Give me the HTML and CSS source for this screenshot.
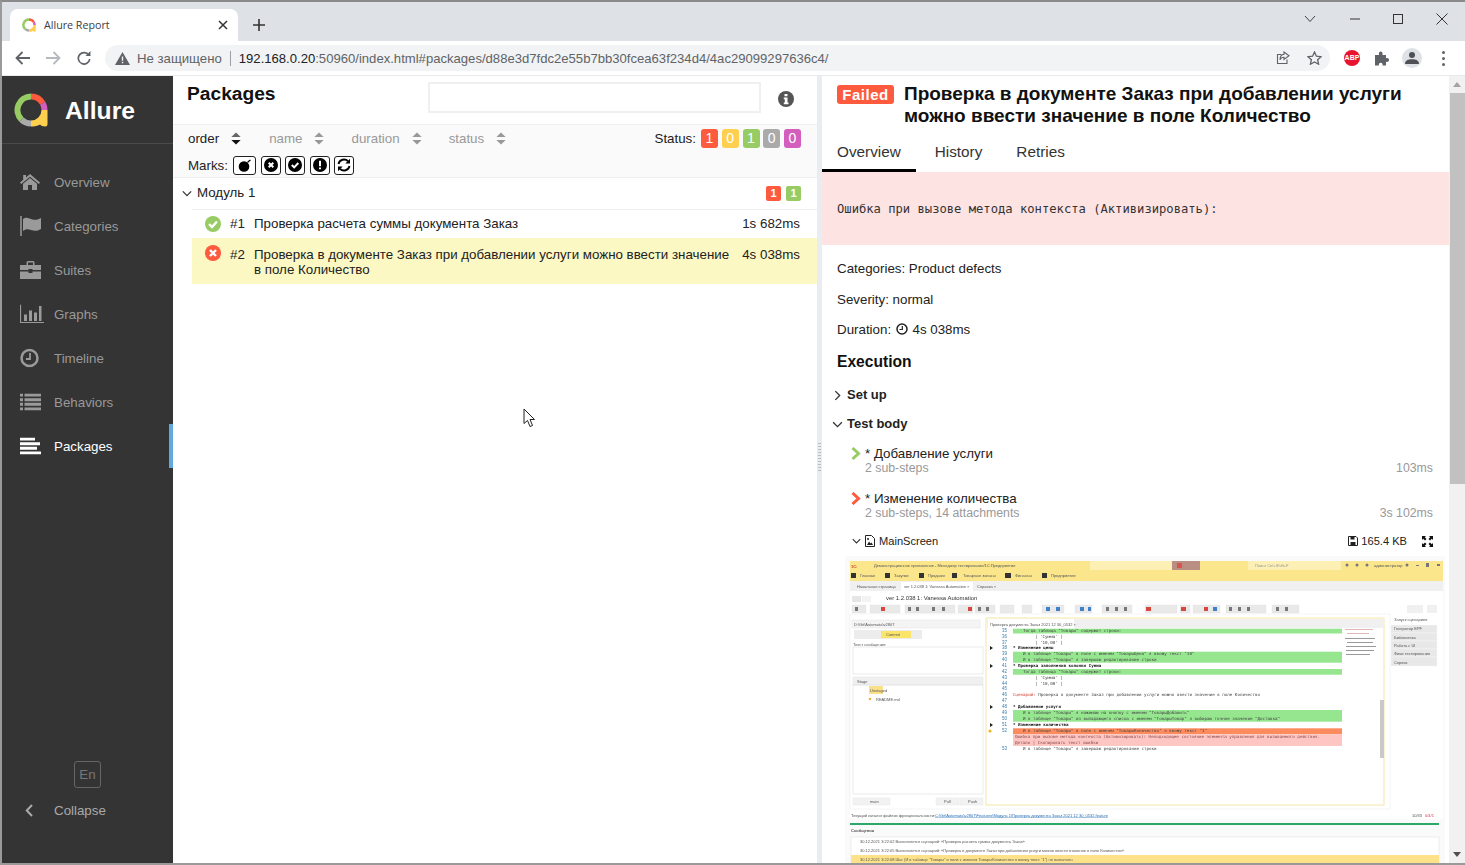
FILE: index.html
```html
<!DOCTYPE html>
<html lang="ru">
<head>
<meta charset="utf-8">
<title>Allure Report</title>
<link rel="stylesheet" href="styles.css">
</head>
<body>
<svg class="defs" width="0" height="0" aria-hidden="true">
  <symbol id="logo" viewBox="0 0 34 34">
    <path d="M17 3.500A13.500 13.500 0 0 1 28.700 10.250" fill="none" stroke="#fd5a3e" stroke-width="6"/>
    <path d="M28.700 10.250A13.500 13.500 0 0 1 30.500 17" fill="none" stroke="#d35ebe" stroke-width="6"/>
    <path d="M17 30.500A13.500 13.500 0 0 1 7.450 26.550" fill="none" stroke="#aaa" stroke-width="6"/>
    <path d="M7.450 26.550A13.500 13.500 0 0 1 17 3.500" fill="none" stroke="#97cc64" stroke-width="6"/>
    <path d="M27.500 17H33.500V31a2.500 2.500 0 0 1-2.500 2.500c-2.500 0-4-.8-5-2-2.500 1.500-5.500 2-9 2V27.500A10.500 10.500 0 0 0 27.500 17z" fill="#ffd050"/>
  </symbol>
  <symbol id="sort" viewBox="0 0 10 14"><path d="M5 0.500 10 5.500H0zM5 13.500 0 8.500H10z"/></symbol>
  <symbol id="chev-down" viewBox="0 0 12 8"><path d="M1 1.500 6 6.500 11 1.500" fill="none" stroke="currentColor" stroke-width="1.500"/></symbol>
  <symbol id="chev-right" viewBox="0 0 8 12"><path d="M1.500 1 6.500 6 1.500 11" fill="none" stroke="currentColor" stroke-width="1.500"/></symbol>
  <symbol id="step-chev" viewBox="0 0 10 13"><path d="M1.500 1 7.500 6.500 1.500 12" fill="none" stroke="currentColor" stroke-width="3"/></symbol>
</svg>

<div class="window">
  <header class="tabstrip">
    <div class="tab">
      <svg class="favicon" width="14" height="14"><use href="#logo"/></svg>
      <span class="tab-title">Allure Report</span>
      <svg class="tab-close" width="10" height="10" viewBox="0 0 10 10"><path d="M1 1 9 9M9 1 1 9" stroke="#333" stroke-width="1.500"/></svg>
    </div>
    <svg class="new-tab" width="12" height="12" viewBox="0 0 12 12"><path d="M6 0V12M0 6H12" stroke="#333" stroke-width="1.600"/></svg>
    <div class="win-controls">
      <svg width="12" height="8" viewBox="0 0 12 8"><path d="M1 1 6 6.500 11 1" fill="none" stroke="#444" stroke-width="1"/></svg>
      <svg class="wc-min" width="10" height="2" viewBox="0 0 10 2"><path d="M0 1H10" stroke="#333" stroke-width="1"/></svg>
      <svg class="wc-max" width="10" height="10" viewBox="0 0 10 10"><rect x=".5" y=".5" width="9" height="9" fill="none" stroke="#333"/></svg>
      <svg class="wc-close" width="12" height="12" viewBox="0 0 12 12"><path d="M.5.500 11.500 11.500M11.500.500.500 11.500" stroke="#333" stroke-width="1"/></svg>
    </div>
  </header>

  <nav class="toolbar">
    <svg class="tb-btn" width="16" height="14" viewBox="0 0 16 14"><path d="M15 7H2M7.500 1 1.500 7l6 6" fill="none" stroke="#5f6368" stroke-width="1.800"/></svg>
    <svg class="tb-btn tb-fwd" width="16" height="14" viewBox="0 0 16 14"><path d="M1 7H14M8.500 1l6 6-6 6" fill="none" stroke="#b5b8bc" stroke-width="1.800"/></svg>
    <svg class="tb-btn" width="14" height="14" viewBox="0 0 14 14"><path d="M11.800 4.200A5.700 5.700 0 1 0 12.700 8" fill="none" stroke="#5f6368" stroke-width="1.700"/><path d="M8.500 5H13.500V0z" fill="#5f6368"/></svg>
    <div class="omnibox">
      <svg class="warn" width="15" height="13" viewBox="0 0 15 13"><path d="M7.500 0 15 13H0z" fill="#5f6368"/><path d="M6.800 4.500h1.400v4.200H6.800zM6.800 9.800h1.400v1.400H6.800z" fill="#f1f3f4"/></svg>
      <span class="insecure">Не защищено</span>
      <span class="omni-sep"></span>
      <span class="url"><span class="url-host">192.168.0.20</span>:50960/index.html#packages/d88e3d7fdc2e55b7bb30fcea63f234d4/4ac29099297636c4/</span>
      <svg class="omni-share" width="14" height="14" viewBox="0 0 14 14"><path d="M11 8.500V12.500H1.500V3.500H5.500" fill="none" stroke="#5f6368" stroke-width="1.100"/><path d="M8 1 13 4.800 8 8.500V6.300C6 6.300 4.800 7 4 8.800 4 5.500 5.500 3.600 8 3.300z" fill="none" stroke="#5f6368" stroke-width="1.100"/></svg>
      <svg class="omni-star" width="15" height="14" viewBox="0 0 15 14"><path d="M7.500 1 9.400 5.200 14 5.700 10.600 8.700 11.600 13.200 7.500 10.900 3.400 13.200 4.400 8.700 1 5.700 5.600 5.200z" fill="none" stroke="#5f6368" stroke-width="1.300"/></svg>
    </div>
    <span class="abp">ABP</span>
    <svg class="puzzle" width="15" height="15" viewBox="0 0 15 15"><path d="M1 4H5C4.500 1.500 5.500.500 6.700.500S9 1.500 8.500 4H12V7.200C14.500 6.800 15 8 15 9S14.500 11.200 12 10.800V14.500H8.500C9 12.500 8 11.700 6.700 11.700S4.500 12.500 5 14.500H1z" fill="#5f6368"/></svg>
    <span class="avatar"><svg width="14" height="12" viewBox="0 0 14 12"><circle cx="7" cy="3" r="3" fill="#4d5156"/><path d="M0 12C0 8.500 3 7.300 7 7.300S14 8.500 14 12z" fill="#4d5156"/></svg></span>
    <span class="kebab"><i></i><i></i><i></i></span>
  </nav>

  <div class="app">
    <aside class="sidebar">
      <div class="brand">
        <svg class="brand-logo" width="34" height="34"><use href="#logo"/></svg>
        <span class="brand-name">Allure</span>
      </div>
      <ul class="menu">
        <li class="menu-item"><svg class="menu-icon" width="20" height="16" viewBox="0 0 20 16"><path d="M10 0 20 8.500 18.800 10 10 2.700 1.200 10 0 8.500 3.200 5.800V1H6V3.500z" fill="#9a9a9a"/><path d="M10 4 17 9.800V16H12V11H8V16H3V9.800z" fill="#9a9a9a"/></svg><span>Overview</span></li>
        <li class="menu-item"><svg class="menu-icon" width="21" height="20" viewBox="0 0 21 20"><path d="M1 0V20" stroke="#9a9a9a" stroke-width="1.500"/><path d="M3 3C6 .5 9 2 11 3S17 4.500 21 2V13C17 15.500 14 15 11 14S6 12.500 3 15z" fill="#9a9a9a"/></svg><span>Categories</span></li>
        <li class="menu-item"><svg class="menu-icon" width="21" height="18" viewBox="0 0 21 18"><path d="M6.500 4V1.500A1.500 1.500 0 0 1 8 0h5a1.500 1.500 0 0 1 1.500 1.500V4H21V9H12.500V8H8.500V9H0V4zM8 4h5V1.600H8zM0 10.500H8.500V12H12.500V10.500H21V18H0z" fill="#9a9a9a"/></svg><span>Suites</span></li>
        <li class="menu-item"><svg class="menu-icon" width="24" height="19" viewBox="0 0 24 19"><path d="M.5 0V18H24" fill="none" stroke="#9a9a9a" stroke-width="1.200"/><path d="M4 10H7V16.500H4zM9 6H12V16.500H9zM14 8H17V16.500H14zM19 1.500H21.500V16.500H19z" fill="#9a9a9a"/></svg><span>Graphs</span></li>
        <li class="menu-item"><svg class="menu-icon" width="19" height="19" viewBox="0 0 19 19"><circle cx="9.500" cy="9.500" r="8" fill="none" stroke="#9a9a9a" stroke-width="2.500"/><path d="M10 4.500V10.500H6" fill="none" stroke="#9a9a9a" stroke-width="1.800"/></svg><span>Timeline</span></li>
        <li class="menu-item"><svg class="menu-icon" width="21" height="17" viewBox="0 0 21 17"><path d="M0 0H3V3H0zM4.500 0H21V3H4.500zM0 4.700H3V7.700H0zM4.500 4.700H21V7.700H4.500zM0 9.300H3V12.300H0zM4.500 9.300H21V12.300H4.500zM0 14H3V17H0zM4.500 14H21V17H4.500z" fill="#9a9a9a"/></svg><span>Behaviors</span></li>
        <li class="menu-item is-active"><svg class="menu-icon" width="21" height="17" viewBox="0 0 21 17"><path d="M0 0H15V3H0zM0 4.700H20V7.700H0zM0 9.300H17V12.300H0zM0 14H21V17H0z" fill="#fff"/></svg><span>Packages</span></li>
      </ul>
      <div class="side-foot">
        <span class="lang">En</span>
        <div class="collapse"><svg class="menu-icon collapse-icon" width="8" height="13" viewBox="0 0 8 13"><path d="M7 1 1.800 6.500 7 12" fill="none" stroke="#aaa" stroke-width="2"/></svg><span>Collapse</span></div>
      </div>
    </aside>

    <main class="tree-pane">
      <div class="tree-head">
        <h2 class="tree-title">Packages</h2>
        <input class="search" type="text" aria-label="search">
        <svg class="info" width="16" height="16" viewBox="0 0 16 16"><circle cx="8" cy="8" r="8" fill="#555"/><path d="M6.500 3h3v2.300h-3zM5.800 6.500h3.700v5h1v1.700H5.800v-1.700h1v-3.300h-1z" fill="#fff"/></svg>
      </div>
      <div class="tree-controls">
        <div class="ctrl-row">
          <span class="sorter is-on">order<svg class="sort" width="10" height="13" viewBox="0 0 10 14"><path class="sort-up" d="M5 0.500 10 5.500H0z"/><path d="M5 13.500 0 8.500H10z"/></svg></span>
          <span class="sorter">name<svg class="sort" width="10" height="13"><use href="#sort"/></svg></span>
          <span class="sorter">duration<svg class="sort" width="10" height="13"><use href="#sort"/></svg></span>
          <span class="sorter">status<svg class="sort" width="10" height="13"><use href="#sort"/></svg></span>
          <span class="status-label">Status:</span>
          <span class="count c-failed">1</span><span class="count c-broken">0</span><span class="count c-passed">1</span><span class="count c-skipped">0</span><span class="count c-unknown">0</span>
        </div>
        <div class="ctrl-row marks-row">
          <span class="marks-label">Marks:</span>
          <span class="mark mark-wide"><svg width="14" height="14" viewBox="0 0 14 14"><circle cx="6" cy="8.500" r="5.300" fill="#000"/><path d="M9.500 4.500 11 3l1.500-1" stroke="#000" stroke-width="1.200"/></svg></span>
          <span class="mark"><svg width="14" height="14" viewBox="0 0 14 14"><circle cx="7" cy="7" r="7" fill="#000"/><path d="M4.700 4.700 9.300 9.300M9.300 4.700 4.700 9.300" stroke="#fff" stroke-width="2"/></svg></span>
          <span class="mark"><svg width="14" height="14" viewBox="0 0 14 14"><circle cx="7" cy="7" r="7" fill="#000"/><path d="M3.800 7 6.200 9.400 10.300 5" fill="none" stroke="#fff" stroke-width="2"/></svg></span>
          <span class="mark"><svg width="14" height="14" viewBox="0 0 14 14"><circle cx="7" cy="7" r="7" fill="#000"/><path d="M6 2.800H8V8.200H6zM6 9.500H8V11.300H6z" fill="#fff"/></svg></span>
          <span class="mark"><svg width="14" height="14" viewBox="0 0 14 14"><path d="M1.500 6A5.600 5.600 0 0 1 11 3.200M12.500 8A5.600 5.600 0 0 1 3 10.800" fill="none" stroke="#000" stroke-width="1.900"/><path d="M13 .8V5.500H8.300zM1 13.200V8.500H5.700z" fill="#000"/></svg></span>
        </div>
      </div>
      <div class="group-row">
        <svg class="group-chev" width="10" height="7"><use href="#chev-down"/></svg>
        <span class="group-name">Модуль 1</span>
        <span class="mini c-failed">1</span><span class="mini c-passed">1</span>
      </div>
      <div class="test-row">
        <svg class="st" width="16" height="16" viewBox="0 0 16 16"><circle cx="8" cy="8" r="8" fill="#97cc64"/><path d="M4 8.200 7 11 12 5.500" fill="none" stroke="#fff" stroke-width="2.400"/></svg>
        <span class="num">#1</span>
        <span class="name">Проверка расчета суммы документа Заказ</span>
        <span class="time">1s 682ms</span>
      </div>
      <div class="test-row is-selected">
        <svg class="st" width="16" height="16" viewBox="0 0 16 16"><circle cx="8" cy="8" r="8" fill="#fd5a3e"/><path d="M5 5 11 11M11 5 5 11" stroke="#fff" stroke-width="2.400"/></svg>
        <span class="num">#2</span>
        <span class="name">Проверка в документе Заказ при добавлении услуги можно ввести значение в поле Количество</span>
        <span class="time">4s 038ms</span>
      </div>
    </main>

    <div class="splitter"><span class="grip"></span></div>

    <section class="detail">
      <div class="detail-head">
        <span class="failed-badge">Failed</span>
        <h2 class="detail-title">Проверка в документе Заказ при добавлении услуги можно ввести значение в поле Количество</h2>
      </div>
      <div class="tabs">
        <span class="tabs-item is-current">Overview</span>
        <span class="tabs-item">History</span>
        <span class="tabs-item">Retries</span>
      </div>
      <pre class="error">Ошибка при вызове метода контекста (Активизировать):</pre>
      <p class="meta meta-first">Categories: Product defects</p>
      <p class="meta">Severity: normal</p>
      <p class="meta">Duration: <svg class="clock" width="12" height="12" viewBox="0 0 12 12"><circle cx="6" cy="6" r="5" fill="none" stroke="#222" stroke-width="1.500"/><path d="M6.300 3V6.500H3.500" fill="none" stroke="#222" stroke-width="1.200"/></svg> 4s 038ms</p>
      <h3 class="exec">Execution</h3>
      <div class="stage stage-setup"><svg class="stage-icon" width="7" height="11"><use href="#chev-right"/></svg>Set up</div>
      <div class="stage stage-body"><svg class="stage-icon-d" width="11" height="7"><use href="#chev-down"/></svg>Test body</div>
      <div class="step">
        <svg class="step-chev ok" width="10" height="13"><use href="#step-chev"/></svg>
        <div class="step-text"><div class="step-name">* Добавление услуги</div><div class="step-sub"><span>2 sub-steps</span><span>103ms</span></div></div>
      </div>
      <div class="step">
        <svg class="step-chev bad" width="10" height="13"><use href="#step-chev"/></svg>
        <div class="step-text"><div class="step-name">* Изменение количества</div><div class="step-sub"><span>2 sub-steps, 14 attachments</span><span>3s 102ms</span></div></div>
      </div>
      <div class="attach">
        <svg class="attach-chev" width="9" height="6"><use href="#chev-down"/></svg>
        <svg class="attach-file" width="10" height="12" viewBox="0 0 10 12"><path d="M.5.500H6.500L9.500 3.500V11.500H.5z" fill="none" stroke="#222"/><path d="M2 10 4 6.500 5.500 8.500 6.500 7.500 8 10z" fill="#222"/><circle cx="3" cy="4" r="1" fill="#222"/></svg>
        <span class="attach-name">MainScreen</span>
        <svg class="attach-disk" width="10" height="10" viewBox="0 0 10 10"><path d="M.5.500H8L9.500 2V9.500H.5z" fill="none" stroke="#222"/><path d="M2.500 1H6.500V3.500H2.500zM2.500 6H7.500V9H2.500z" fill="#222"/></svg>
        <span class="attach-size">165.4 KB</span>
        <svg class="attach-expand" width="11" height="11" viewBox="0 0 11 11"><path d="M0 0H4L2.800 1.200 4.500 3 3 4.500 1.200 2.800 0 4zM11 0V4L9.800 2.800 8 4.500 6.500 3 8.200 1.200 7 0zM0 11V7L1.200 8.200 3 6.500 4.500 8 2.800 9.800 4 11zM11 11H7L8.200 9.800 6.500 8 8 6.500 9.800 8.200 11 7z" fill="#111"/></svg>
      </div>
      <div class="shot-wrap">
        <svg class="shot" width="600" height="310" viewBox="845 555 600 310">
          <rect x="845" y="555" width="600" height="310" fill="#fafafa"/>
          <rect x="850" y="560" width="593" height="20" fill="#fbe68c"/>
          <rect x="1090" y="560" width="82" height="9" fill="#fdf0b5"/>
          <rect x="1172" y="560" width="28" height="9" fill="#b98e83"/>
          <rect x="1177" y="562" width="5" height="5" fill="#d9534f"/>
          <rect x="1248" y="560" width="93" height="9" fill="#fdf0b5"/>
          <text class="t4 red b" x="851" y="566.500">1С:</text>
          <text class="t4" x="874" y="566">Демонстрационное приложение - Менеджер тестирования/1С:Предприятие</text>
          <text class="t4" x="1374" y="566">администратор</text>
          <text class="t4 dim" x="1255" y="566">Поиск Ctrl+Shift+F</text>
          <g fill="#777"><circle cx="1347" cy="564" r="1.500"/><circle cx="1357" cy="564" r="1.500"/><circle cx="1367" cy="564" r="1.500"/><circle cx="1407" cy="564" r="1.500"/><rect x="1416" y="564" width="3" height="1"/><rect x="1426" y="562" width="3" height="4"/><rect x="1437" y="563" width="3" height="2"/></g>
          <text class="t4" x="860" y="576">Главная</text><text class="t4" x="894" y="576">Закупки</text><text class="t4" x="928" y="576">Продажи</text><text class="t4" x="963" y="576">Товарные запасы</text><text class="t4" x="1015" y="576">Финансы</text><text class="t4" x="1051" y="576">Предприятие</text>
          <rect x="851" y="572" width="5" height="5" fill="#333"/><rect x="885" y="572" width="5" height="5" fill="#333"/><rect x="919" y="572" width="5" height="5" fill="#333"/><rect x="952" y="572" width="5" height="5" fill="#333"/><rect x="1005" y="572" width="6" height="5" fill="#333"/><rect x="1042" y="572" width="5" height="5" fill="#333"/>
          <rect x="850" y="580" width="593" height="10" fill="#f0f0f0"/>
          <rect x="901" y="581" width="72" height="9" fill="#fff"/>
          <text class="t4" x="857" y="586.500">Начальная страница</text><text class="t4" x="904" y="586.500">ver 1.2.038 1: Vanessa Automation ×</text><text class="t4" x="977" y="586.500">Справка ×</text>
          <rect x="850" y="590" width="593" height="228" fill="#fff"/>
          <text class="t7" x="886" y="599">ver 1.2.038 1: Vanessa Automation</text>
          <rect x="852" y="595" width="9" height="6" fill="#e6e6e6"/><rect x="862" y="595" width="9" height="6" fill="#f3f3f3"/>
          <g fill="#e9e9e9" stroke="#dcdcdc" stroke-width=".3"><rect x="852" y="604" width="14" height="8"/><rect x="870" y="604" width="30" height="8"/><rect x="905" y="604" width="50" height="8"/><rect x="1000" y="604" width="14" height="8"/><rect x="1022" y="604" width="10" height="8"/><rect x="1042" y="604" width="22" height="8"/><rect x="1075" y="604" width="17" height="8"/><rect x="1102" y="604" width="30" height="8"/><rect x="1145" y="604" width="32" height="8"/><rect x="1180" y="604" width="10" height="8"/><rect x="1193" y="604" width="27" height="8"/><rect x="1226" y="604" width="40" height="8"/><rect x="1272" y="604" width="27" height="8"/><rect x="958" y="604" width="15" height="8"/><rect x="975" y="604" width="20" height="8"/></g>
          <g fill="#777"><rect x="855" y="606" width="3" height="4"/><rect x="908" y="606" width="3" height="4"/><rect x="916" y="606" width="3" height="4"/><rect x="932" y="606" width="3" height="4"/><rect x="942" y="606" width="3" height="4"/><rect x="978" y="606" width="3" height="4"/><rect x="986" y="606" width="3" height="4"/><rect x="1106" y="606" width="3" height="4"/><rect x="1115" y="606" width="3" height="4"/><rect x="1124" y="606" width="3" height="4"/><rect x="1229" y="606" width="3" height="4"/><rect x="1238" y="606" width="3" height="4"/><rect x="1247" y="606" width="3" height="4"/><rect x="1276" y="606" width="3" height="4"/><rect x="1285" y="606" width="3" height="4"/></g>
          <g fill="#d8473f"><rect x="881" y="606" width="4" height="4"/><rect x="968" y="606" width="4" height="4"/><rect x="1146" y="606" width="5" height="4"/><rect x="1181" y="606" width="5" height="4"/><rect x="1204" y="606" width="4" height="4"/></g>
          <g fill="#3f80c8"><rect x="1046" y="606" width="4" height="4"/><rect x="1056" y="606" width="4" height="4"/><rect x="1080" y="606" width="4" height="4"/><rect x="1088" y="606" width="3" height="4"/><rect x="1213" y="606" width="4" height="4"/></g>
          <rect x="1407" y="604" width="16" height="8" fill="#f0f0f0"/><rect x="1427" y="604" width="10" height="8" fill="#f0f0f0"/>
          <rect x="850" y="613" width="540" height="195" fill="none" stroke="#eee" stroke-width=".6"/>
          <rect x="852" y="619" width="128" height="8" fill="#f4f4f4" stroke="#e3e3e3" stroke-width=".5"/>
          <text class="t4" x="854" y="624.500">D:\Git\Automata\v2807</text>
          <rect x="854" y="629" width="68" height="9" fill="#ececec"/><rect x="881" y="630" width="30" height="7" fill="#fbe46a"/>
          <text class="t4" x="886" y="635">Commit</text>
          <text class="t4" x="853" y="644.500">Текст сообщения:</text>
          <rect x="853" y="646" width="130" height="27" fill="#fff" stroke="#ddd" stroke-width=".6"/>
          <rect x="853" y="676" width="130" height="8" fill="#f0f0f0" stroke="#ddd" stroke-width=".4"/>
          <text class="t4" x="857" y="681.500">Stage</text>
          <rect x="869" y="685" width="14" height="8" fill="#fbe08a"/>
          <text class="t4" x="870" y="690.500">Unstaged</text>
          <circle cx="870" cy="698" r="1.300" fill="#e8b53c"/>
          <text class="t4" x="876" y="699.500">README.md</text>
          <rect x="853" y="684" width="130" height="109" fill="none" stroke="#ddd" stroke-width=".6"/>
          <rect x="853" y="797" width="37" height="7" fill="#f2f2f2" stroke="#ddd" stroke-width=".3"/><text class="t4" x="870" y="802">main</text>
          <rect x="936" y="797" width="23" height="7" fill="#f2f2f2" stroke="#ddd" stroke-width=".3"/><text class="t4" x="944" y="802">Pull</text>
          <rect x="960" y="797" width="23" height="7" fill="#f2f2f2" stroke="#ddd" stroke-width=".3"/><text class="t4" x="968" y="802">Push</text>
          <rect x="986" y="617" width="398" height="187" fill="#fff" stroke="#f3e6a8" stroke-width="1"/>
          <rect x="987" y="618" width="396" height="9" fill="#f0f0f0"/>
          <rect x="988" y="618" width="86" height="9" fill="#fff"/>
          <text class="t4" x="990" y="624.500">Проверка документа Заказ 2021 12 30_0532 ×</text>
          <g fill="#95e68f"><rect x="1013" y="627.700" width="329" height="4.800"/><rect x="1013" y="650.700" width="329" height="11"/><rect x="1013" y="668" width="329" height="5.700"/><rect x="1013" y="709" width="329" height="11.700"/></g>
          <rect x="1013" y="727.300" width="329" height="6" fill="#fc8b5e"/>
          <rect x="1013" y="733.300" width="329" height="11.700" fill="#fdc6c2"/>
          <g class="ln" transform="translate(0,-.7)">
            <text x="1002" y="632">35</text><text x="1002" y="638">36</text><text x="1002" y="644">37</text><text x="1002" y="649">38</text><text x="1002" y="655">39</text><text x="1002" y="661">40</text><text x="1002" y="667">41</text><text x="1002" y="673">42</text><text x="1002" y="679">43</text><text x="1002" y="685">44</text><text x="1002" y="690">45</text><text x="1002" y="696">46</text><text x="1002" y="702">47</text><text x="1002" y="708">48</text><text x="1002" y="714">49</text><text x="1002" y="720">50</text><text x="1002" y="726">51</text><text x="1002" y="732">52</text><text x="1002" y="750">53</text>
          </g>
          <g class="code" transform="translate(0,-.7)">
            <text x="1023" y="632">Тогда таблица "Товары" содержит строки:</text>
            <text x="1035" y="638">| 'Сумма' |</text><text x="1035" y="644">| '10,00' |</text>
            <text class="b" x="1013" y="649">* Изменение цены</text>
            <text x="1023" y="655">И в таблице "Товары" в поле с именем "ТоварыЦена" я ввожу текст "10"</text>
            <text x="1023" y="661">И в таблице "Товары" я завершаю редактирование строки</text>
            <text class="b" x="1013" y="667">* Проверка заполнения колонки Сумма</text>
            <text x="1023" y="673">Тогда таблица "Товары" содержит строки:</text>
            <text x="1035" y="679">| 'Сумма' |</text><text x="1035" y="685">| '10,00' |</text>
            <text x="1013" y="696"><tspan class="red">Сценарий:</tspan> Проверка в документе Заказ при добавлении услуги можно ввести значение в поле Количество</text>
            <text class="b" x="1013" y="708">* Добавление услуги</text>
            <text x="1023" y="714">И в таблице "Товары" я нажимаю на кнопку с именем "ТоварыДобавить"</text>
            <text x="1023" y="720">И в таблице "Товары" из выпадающего списка с именем "ТоварыТовар" я выбираю точное значение "Доставка"</text>
            <text class="b" x="1013" y="726">* Изменение количества</text>
            <text x="1023" y="732">И в таблице "Товары" в поле с именем "ТоварыКоличество" я ввожу текст "1"</text>
            <text class="err" x="1015" y="737.500">Ошибка при вызове метода контекста (Активизировать): Неподходящее состояние элемента управления для вызываемого действия.</text>
            <text class="err" x="1015" y="743.500">Детали | Скопировать текст ошибки</text>
            <text x="1023" y="750">И в таблице "Товары" я завершаю редактирование строки</text>
          </g>
          <g fill="#222"><path d="M990 645v4l3-2zM990 663v4l3-2zM990 704v4l3-2zM990 722v4l3-2z"/></g>
          <circle cx="990" cy="730" r="1.600" fill="#f0b429"/>
          <g fill="#e2b7b7"><rect x="1345" y="628" width="28" height="1"/><rect x="1347" y="632" width="22" height="1"/></g>
          <g fill="#999"><rect x="1345" y="637" width="30" height="1"/><rect x="1347" y="641" width="26" height="1"/><rect x="1346" y="645" width="30" height="1"/><rect x="1346" y="649" width="28" height="1"/><rect x="1346" y="653" width="24" height="1"/></g>
          <rect x="1380" y="699" width="4" height="58" fill="#c9c9c9"/>
          <rect x="1391" y="615" width="46" height="9" fill="#fff"/>
          <g fill="#e8e8e8" stroke="#f8f8f8" stroke-width=".4"><rect x="1391" y="624" width="46" height="8"/><rect x="1391" y="632" width="46" height="8"/><rect x="1391" y="640" width="46" height="8"/><rect x="1391" y="648" width="46" height="8"/><rect x="1391" y="656" width="46" height="9"/></g>
          <text class="t4" x="1394" y="620">Запуск сценариев</text><text class="t4" x="1394" y="628.500">Генератор EPF</text><text class="t4" x="1394" y="637.500">Библиотека</text><text class="t4" x="1394" y="645.500">Работа с UI</text><text class="t4" x="1394" y="653.500">Фичи тестирования</text><text class="t4" x="1394" y="662.500">Сервис</text>
          <text class="t4" x="851" y="815.500">Текущий каталог файлов функциональности:</text>
          <text class="t4 link" x="935" y="815.500">C:\Git\Automata\v2807\Features\Модуль 1\Проверка документа Заказ 2021 12 30_0532.feature</text>
          <text class="t4" x="1412" y="815.500">10/33</text><text class="t4 tally" x="1425" y="815.500">0/4/1</text>
          <rect x="850" y="822" width="589" height="2" fill="#2aa96a"/>
          <text class="t4 b" x="851" y="830.500">Сообщения</text>
          <rect x="851" y="836" width="588" height="29" fill="#fff" stroke="#ddd" stroke-width=".5"/>
          <rect x="851" y="854" width="588" height="9" fill="#fde28a"/>
          <text class="t4" x="860" y="841.500">30.12.2021 3:22:02 Выполняется сценарий: «Проверка расчета суммы документа Заказ»</text>
          <text class="t4" x="860" y="850.500">30.12.2021 3:22:05 Выполняется сценарий: «Проверка в документе Заказ при добавлении услуги можно ввести значение в поле Количество»</text>
          <text class="t4" x="860" y="859.500">30.12.2021 3:22:08 Шаг (И в таблице "Товары" в поле с именем ТоварыКоличество я ввожу текст "1") не выполнен.</text>
        </svg>
      </div>
    </section>

    <div class="scrollbar">
      <span class="arrow-up"></span>
      <span class="thumb"></span>
      <span class="arrow-down"></span>
    </div>
  </div>

  <svg class="cursor" width="13" height="20" viewBox="0 0 13 20"><path d="M1 1V15.500L4.500 12.500 7 18.500 9.500 17.500 7 11.500H11.500z" fill="#fff" stroke="#222" stroke-width="1"/></svg>
</div>
</body>
</html>
```

FILE: styles.css
```css
* { box-sizing: border-box; }
html, body { margin: 0; height: 100%; overflow: hidden; background: #fff; }
body { font-family: "Liberation Sans", Arial, sans-serif; font-size: 13.33px; color: #222; }
.defs { position: absolute; }
ul, h2, h3, p, pre { margin: 0; padding: 0; }
ul { list-style: none; }

.window { position: relative; width: 1465px; height: 865px; display: flex; flex-direction: column; border-top: 2px solid #8a8a8a; border-left: 2px solid #9a9a9a; border-bottom: 2px solid #999; }

/* browser chrome */
.tabstrip { height: 39px; flex: none; background: #dee1e6; display: flex; align-items: flex-end; padding-left: 8px; }
.tab { width: 228px; height: 32px; background: #fff; border-radius: 8px 8px 0 0; display: flex; align-items: center; padding: 0 6px 0 12px; }
.favicon { flex: none; }
.tab-title { margin-left: 8px; font-family: "Open Sans", "Liberation Sans", sans-serif; font-size: 10.700px; color: #3c4043; flex: 1; }
.tab-close { margin-right: 4px; }
.new-tab { margin: 0 0 10px 15px; flex: none; }
.win-controls { margin: 0 17px 0 auto; align-self: flex-start; padding-top: 7px; height: 26px; display: flex; align-items: center; }
.wc-min { margin-left: 34px; }
.wc-max { margin-left: 33px; }
.wc-close { margin-left: 33px; }

.toolbar { height: 35px; flex: none; background: #fff; display: flex; align-items: center; padding-left: 13px; border-bottom: 1px solid #e8eaed; }
.tb-btn { margin-right: 14px; flex: none; }
.tb-fwd { margin-right: 16px; }
.omnibox { width: 1225px; height: 26px; border-radius: 13px; background: #f1f3f4; display: flex; align-items: center; padding-left: 10px; flex: none; }
.warn { flex: none; }
.insecure { margin-left: 7px; color: #5f6368; font-size: 13.200px; }
.omni-sep { width: 1px; height: 15px; background: #9aa0a6; margin: 0 8px 0 8px; }
.url { color: #5f6368; font-size: 13.100px; white-space: nowrap; }
.url-host { color: #202124; }
.omni-share { margin-left: auto; }
.omni-star { margin: 0 8px 0 17px; }
.abp { width: 16px; height: 16px; border-radius: 50%; background: #e8142f; color: #fff; font-size: 7px; font-weight: bold; line-height: 16px; text-align: center; margin-left: 14px; flex: none; }
.puzzle { margin-left: 14px; flex: none; }
.avatar { width: 20px; height: 20px; border-radius: 50%; background: #dee1e6; margin-left: 13px; display: flex; align-items: center; justify-content: center; flex: none; }
.kebab { display: flex; flex-direction: column; gap: 3px; margin-left: 20px; }
.kebab i { width: 3px; height: 3px; border-radius: 50%; background: #5f6368; }

/* app */
.app { flex: 1; min-height: 0; display: flex; }
.sidebar { width: 171px; flex: none; background: #343434; display: flex; flex-direction: column; }
.brand { height: 68px; display: flex; align-items: center; padding: 0 0 0 12px; border-bottom: 1px solid #4a4a4a; flex: none; }
.brand-name { margin: 3px 0 0 17px; color: #fff; font-size: 24.700px; font-weight: bold; }
.menu { padding-top: 16px; }
.menu-item { height: 44px; display: flex; align-items: center; color: #999; position: relative; }
.menu-item .menu-icon { position: absolute; left: 18px; top: 50%; transform: translateY(-50%); }
.menu-item span { margin-left: 52px; }
.menu-item.is-active { color: #fff; }
.menu-item.is-active::after { content: ""; position: absolute; right: 0; top: 0; bottom: 0; width: 4px; background: #5ea9dd; }
.side-foot { margin-top: auto; padding-bottom: 31px; display: flex; flex-direction: column; }
.lang { width: 27px; height: 27px; margin-left: 72px; border: 1px solid #666; border-radius: 3px; color: #777; line-height: 25px; text-align: center; }
.collapse { height: 44px; display: flex; align-items: center; color: #aaa; position: relative; }
.collapse-icon { margin-left: 23px; }
.collapse span { margin-left: 21px; }

.tree-pane { width: 644px; flex: none; background: #fff; display: flex; flex-direction: column; overflow: hidden; }
.tree-head { height: 49px; display: flex; align-items: flex-start; border-bottom: 1px solid #eee; flex: none; padding: 0 23px 0 14px; }
.tree-title { font-size: 19.200px; font-weight: bold; color: #111; line-height: 23px; margin-top: 6px; }
.search { width: 333px; height: 31px; margin: 6px 0 0 auto; border: 2px solid #f0f0f0; background: #fff; flex: none; }
.info { margin: 15px 0 0 17px; }
.tree-controls { background: #fafafa; height: 53px; border-bottom: 1px solid #eee; padding-left: 15px; flex: none; }
.ctrl-row { display: flex; align-items: center; height: 26px; }
.marks-row { margin-top: 1px; }
.sorter { display: inline-flex; align-items: center; color: #999; margin-right: 27px; }
.sorter.is-on { color: #222; margin-right: 28px; }
.sort { margin-left: 12px; fill: #999; }
.sorter.is-on .sort { fill: #111; }
.sorter.is-on .sort-up { fill: #666; }
.status-label { margin-left: auto; margin-right: 5px; }
.count { width: 17px; height: 19px; border-radius: 3px; color: #fff; text-align: center; line-height: 19px; margin-right: 3.750px; font-size: 14px; }
.count:last-child { margin-right: 16px; }
.c-failed { background: #fd5a3e; }
.c-broken { background: #ffd050; }
.c-passed { background: #97cc64; }
.c-skipped { background: #aaa; }
.c-unknown { background: #d35ebe; }
.marks-label { margin-right: 5px; }
.mark { width: 20px; height: 19px; border: 1px solid #222; border-radius: 3px; background: #fff; display: inline-flex; align-items: center; justify-content: center; margin-right: 4.500px; }
.mark-wide { width: 23px; }
.group-row { height: 31px; display: flex; align-items: center; padding-left: 9px; flex: none; }
.group-chev { color: #333; }
.group-name { margin: 0 0 3px 5px; flex: 1; }
.mini { width: 15px; height: 15px; border-radius: 2px; color: #fff; font-size: 11px; font-weight: bold; line-height: 15px; text-align: center; margin-right: 5px; }
.mini:last-child { margin-right: 16px; }
.test-row { margin-left: 19px; border-top: 1px solid #eee; display: flex; align-items: flex-start; padding: 6px 17px 6px 13px; line-height: 15px; }
.test-row.is-selected { background: #fcf8c4; border-top-color: #fcf8c4; padding: 8px 17px 7px 13px; }
.is-selected .st { margin-top: -2px; }
.st { flex: none; }
.num { width: 24px; margin-left: 9px; flex: none; }
.name { flex: 1; padding-right: 12px; }
.time { flex: none; }

.splitter { width: 5px; flex: none; background: #e9edf2; display: flex; align-items: center; justify-content: center; }
.grip { width: 3px; height: 30px; margin-top: -24px; background: repeating-linear-gradient(to bottom, #b8bcc2 0 1px, transparent 1px 3px); }

.detail { width: 627px; flex: none; background: #fff; overflow: hidden; display: flex; flex-direction: column; }
.detail-head { display: flex; align-items: flex-start; padding: 7px 30px 0 15px; flex: none; }
.failed-badge { width: 57px; height: 19px; margin: 2px 10px 0 0; border-radius: 3px; background: #fd5a3e; color: #fff; font-weight: bold; font-size: 15px; line-height: 19px; text-align: center; letter-spacing: .5px; flex: none; }
.detail-title { font-size: 19px; line-height: 22px; font-weight: bold; color: #111; }
.tabs { display: flex; margin-top: 11px; height: 34px; flex: none; }
.tabs-item { padding: 5px 15px 0 15px; font-size: 15.300px; color: #333; margin-right: 4px; }
.tabs-item.is-current { border-bottom: 3px solid #000; }
.error { height: 73px; background: #fee3e3; padding: 30px 15px 0; font-family: "DejaVu Sans Mono", monospace; font-size: 12.160px; line-height: 14px; color: #333; flex: none; }
.meta { padding-left: 15px; height: 30.500px; line-height: 16px; flex: none; }
.meta-first { margin-top: 16px; }
.clock { vertical-align: -1px; margin: 0 1px; }
.exec { padding-left: 15px; font-size: 15.600px; line-height: 18px; color: #111; flex: none; }
.stage { padding-left: 12px; font-weight: bold; font-size: 13px; line-height: 16px; display: flex; align-items: center; flex: none; color: #222; }
.stage-setup { margin-top: 16.500px; }
.stage-body { margin-top: 13px; }
.stage-icon { margin-right: 6px; color: #333; }
.stage-icon-d { margin: 0 4px 0 -2px; color: #333; }
.step { display: flex; padding: 0 16px 0 29px; flex: none; }
.step + .step { margin-top: 15px; }
.stage + .step { margin-top: 14px; }
.step-chev { flex: none; margin-top: 1px; }
.step-chev.ok { color: #97cc64; }
.step-chev.bad { color: #fd5a3e; }
.step-text { flex: 1; margin-left: 4px; line-height: 15px; }
.step-sub { display: flex; justify-content: space-between; color: #999; font-size: 12.300px; }
.attach { display: flex; align-items: center; padding: 0 16px 0 30px; margin-top: 12px; height: 16px; flex: none; font-size: 11.100px; }
.attach-chev { color: #333; flex: none; }
.attach-file { margin-left: 4px; flex: none; }
.attach-name { margin-left: 4px; flex: 1; }
.attach-size { margin-left: 3px; }
.attach-expand { margin-left: 15px; }
.shot-wrap { margin: 7px 0 0 23px; flex: none; height: 310px; overflow: hidden; }
.shot { display: block; filter: blur(.35px); }
.shot text { font-family: "Liberation Sans", sans-serif; fill: #555; }
.shot .t4 { font-size: 4px; }
.shot .t7 { font-size: 5.900px; fill: #333; }
.shot .b { font-weight: bold; }
.shot .red { fill: #d13b2e; }
.shot .dim { fill: #999; }
.shot .link { fill: #2a6fb5; text-decoration: underline; }
.shot .tally { fill: #d35; }
.shot .ln text { font-size: 4.500px; fill: #3d7ea6; }
.shot .code text { font-family: "DejaVu Sans Mono", monospace; font-size: 4.200px; fill: #444; }
.shot .code tspan.red { fill: #d13b2e; }
.shot .code .b { fill: #111; font-weight: bold; }
.shot .code .err { fill: #8a4a4a; }

.scrollbar { flex: 1; background: #f1f1f1; display: flex; flex-direction: column; align-items: center; }
.arrow-up { width: 0; height: 0; border: 4px solid transparent; border-top: 0; border-bottom: 5px solid #a3a3a3; margin-top: 6px; }
.thumb { width: 15px; height: 391px; margin-top: 6px; background: #c1c1c1; }
.arrow-down { width: 0; height: 0; border: 4px solid transparent; border-bottom: 0; border-top: 5px solid #505050; margin-top: auto; margin-bottom: 6px; }

.cursor { position: absolute; left: 521px; top: 406px; }
```
